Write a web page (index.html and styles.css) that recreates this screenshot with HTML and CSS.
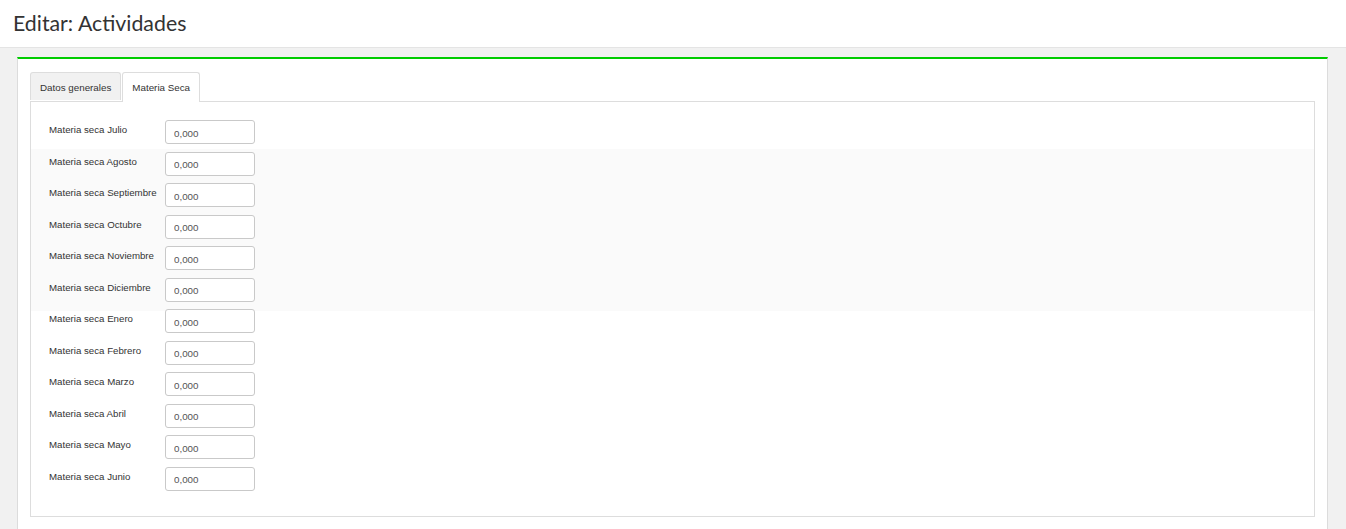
FILE: index.html
```html
<!DOCTYPE html>
<html lang="es">
<head>
<meta charset="utf-8">
<title>Editar: Actividades</title>
<link rel="stylesheet" href="styles.css">
</head>
<body>
<header class="page-header">
  <h1 class="page-title">Editar: Actividades</h1>
</header>
<main class="page-body">
  <section class="panel">
    <ul class="tabs">
      <li class="tab">Datos generales</li>
      <li class="tab tab-active">Materia Seca</li>
    </ul>
    <div class="tab-content">
      <div class="form-row"><label class="form-label">Materia seca Julio</label><input class="form-input" type="text" value="0,000"></div>
      <div class="band">
        <div class="form-row"><label class="form-label">Materia seca Agosto</label><input class="form-input" type="text" value="0,000"></div>
        <div class="form-row"><label class="form-label">Materia seca Septiembre</label><input class="form-input" type="text" value="0,000"></div>
        <div class="form-row"><label class="form-label">Materia seca Octubre</label><input class="form-input" type="text" value="0,000"></div>
        <div class="form-row"><label class="form-label">Materia seca Noviembre</label><input class="form-input" type="text" value="0,000"></div>
        <div class="form-row"><label class="form-label">Materia seca Diciembre</label><input class="form-input" type="text" value="0,000"></div>
      </div>
      <div class="form-row"><label class="form-label">Materia seca Enero</label><input class="form-input" type="text" value="0,000"></div>
      <div class="form-row"><label class="form-label">Materia seca Febrero</label><input class="form-input" type="text" value="0,000"></div>
      <div class="form-row"><label class="form-label">Materia seca Marzo</label><input class="form-input" type="text" value="0,000"></div>
      <div class="form-row"><label class="form-label">Materia seca Abril</label><input class="form-input" type="text" value="0,000"></div>
      <div class="form-row"><label class="form-label">Materia seca Mayo</label><input class="form-input" type="text" value="0,000"></div>
      <div class="form-row"><label class="form-label">Materia seca Junio</label><input class="form-input" type="text" value="0,000"></div>
    </div>
  </section>
</main>
</body>
</html>
```

FILE: styles.css
```css
html, body {
  margin: 0;
  padding: 0;
  height: 100%;
  overflow: hidden;
}
body {
  background: #f1f1f1;
  font-family: "Liberation Sans", Arial, sans-serif;
  color: #333;
}
.page-header {
  background: #fff;
  height: 47px;
  border-bottom: 1px solid #e4e4e4;
  padding-left: 13px;
  box-sizing: content-box;
}
.page-title {
  margin: 0;
  font-family: Lato, "Open Sans", sans-serif;
  font-weight: 400;
  font-size: 21.3px;
  line-height: 46px;
  color: #333;
}
.page-body {
  padding: 9px 18px 0 17px;
}
.panel {
  background: #fff;
  border-top: 2px solid #00cc00;
  border-left: 1px solid #dcdcdc;
  border-right: 1px solid #dcdcdc;
  padding: 13px 12px 20px 12px;
}
.tabs {
  list-style: none;
  margin: 0;
  padding: 0;
  display: flex;
  gap: 1px;
  position: relative;
  z-index: 1;
}
.tab {
  font-size: 9.8px;
  line-height: 13px;
  padding: 8px 9px;
  border: 1px solid #dddddd;
  border-bottom: none;
  border-radius: 3px 3px 0 0;
  background: #f1f1f1;
  color: #333;
  height: 28px;
  box-sizing: border-box;
  white-space: nowrap;
}
.tab-active {
  background: #fff;
  height: 30px;
  margin-bottom: -1px;
}
.tab-content {
  border: 1px solid #dddddd;
  padding: 18px 18px 18px 18px;
}
.band {
  background: #fafafa;
  margin: -3px -18px -2px -18px;
  padding: 3px 18px 2px 18px;
}
.form-row {
  display: flex;
  align-items: flex-start;
  height: 31.5px;
}
.form-label {
  width: 116px;
  flex: none;
  font-size: 9.7px;
  line-height: 13px;
  padding-top: 3px;
  color: #333;
  white-space: nowrap;
}
.form-input {
  width: 90px;
  height: 24px;
  box-sizing: border-box;
  border: 1px solid #c9c9c9;
  border-radius: 3px;
  padding: 2px 8px 0 8px;
  font-family: "Liberation Sans", Arial, sans-serif;
  font-size: 9.8px;
  color: #555;
  background: #fff;
  margin: 0;
}
```
